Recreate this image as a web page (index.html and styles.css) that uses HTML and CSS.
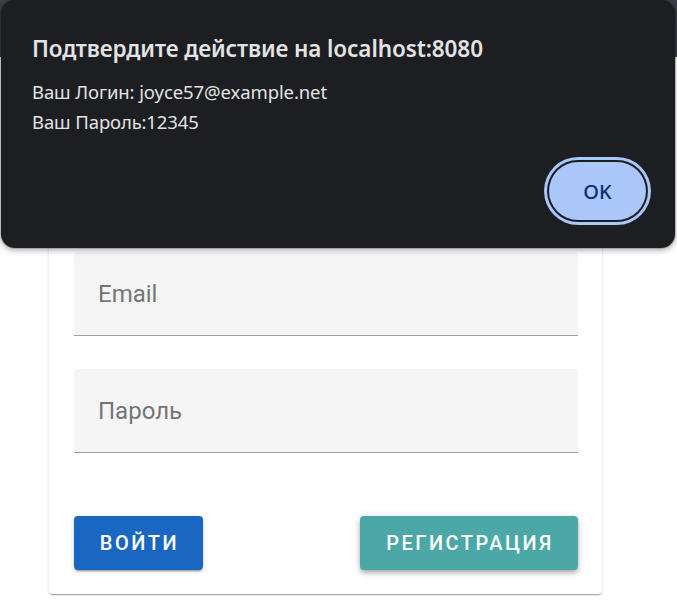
FILE: index.html
```html
<!DOCTYPE html>
<html lang="ru">
<head>
<meta charset="utf-8">
<title>Вход</title>
<link rel="stylesheet" href="styles.css">
</head>
<body>
<header class="topbar"></header>
<main class="main">
  <section class="card">
    <div class="field"><span class="label">Email</span></div>
    <div class="field field-gap"><span class="label">Пароль</span></div>
    <div class="actions">
      <button class="btn btn-primary">Войти</button>
      <button class="btn btn-teal">Регистрация</button>
    </div>
  </section>
</main>
<div class="dialog">
  <h1 class="dialog-title">Подтвердите действие на localhost:8080</h1>
  <p class="dialog-line">Ваш Логин: joyce57@example.net</p>
  <p class="dialog-line">Ваш Пароль:12345</p>
  <div class="dialog-actions">
    <button class="ok">OK</button>
  </div>
</div>
</body>
</html>
```
FILE: styles.css
```css
* { box-sizing: border-box; }
html, body { margin: 0; padding: 0; background: #ffffff; }
body { font-family: Roboto, "Noto Sans", sans-serif; width: 677px; height: 608px; overflow: hidden; position: relative; }
.topbar { height: 57px; background: #3a3e46; }
.main { padding-top: 171px; padding-left: 49px; }
.card {
  width: 553px;
  background: #fff;
  border-radius: 4px;
  padding: 24px 24px 24px 25px;
  box-shadow: 0 2px 1px -1px rgba(0,0,0,.2), 0 1px 1px 0 rgba(0,0,0,.14), 0 1px 3px 0 rgba(0,0,0,.12);
}
.field {
  height: 84px;
  width: 504px;
  background: #f5f5f5;
  border-radius: 4px 4px 0 0;
  border-bottom: 1px solid #9e9e9e;
  display: flex;
  align-items: center;
  padding-left: 24px;
}
.field-gap { margin-top: 33px; }
.label { font-size: 24px; color: #757575; font-family: Roboto, sans-serif; }
.actions { display: flex; justify-content: space-between; width: 504px; margin-top: 63px; }
.btn {
  height: 54px;
  border: none;
  border-radius: 4px;
  color: #fff;
  font-family: Roboto, sans-serif;
  font-weight: 500;
  font-size: 20px;
  letter-spacing: 2.5px;
  text-transform: uppercase;
  padding: 0 0 0 2px;
}
.btn-primary { background: #1a67c2; width: 129px; box-shadow: 0 3px 1px -2px rgba(0,0,0,.2), 0 2px 2px 0 rgba(0,0,0,.14), 0 1px 5px 0 rgba(0,0,0,.12); }
.btn-teal { background: #4ba8a6; width: 218px; box-shadow: 0 2px 4px -1px rgba(0,0,0,.2), 0 4px 5px 0 rgba(0,0,0,.14), 0 1px 10px 0 rgba(0,0,0,.12); }
.dialog {
  position: absolute;
  left: 1px;
  top: 0;
  width: 674px;
  height: 248px;
  background: #1c1e22;
  border-radius: 14px;
  padding: 34px 26px 0 31px;
  box-shadow: 0 2px 6px rgba(0,0,0,.35), 0 0 0 1px rgba(0,0,0,.15);
  color: #e3e3e3;
  font-family: "Noto Sans", "Open Sans", sans-serif;
}
.dialog-title { margin: 0; font-size: 22.5px; font-weight: 600; letter-spacing: -0.1px; line-height: 30px; }
.dialog-line { margin: 0; font-size: 18.5px; line-height: 30px; letter-spacing: -0.1px; }
.dialog-line:first-of-type { margin-top: 13px; }
.dialog-actions { display: flex; justify-content: flex-end; margin-top: 25px; padding-right: 3px; }
.ok {
  width: 97px;
  height: 58px;
  border: none;
  border-radius: 29px;
  background: #abc7fa;
  color: #062e6f;
  font-family: "Noto Sans", sans-serif;
  font-size: 20px;
  font-weight: 500;
  box-shadow: 0 0 0 2px #1c1e22, 0 0 0 5px #a8c7fa;
}
```
